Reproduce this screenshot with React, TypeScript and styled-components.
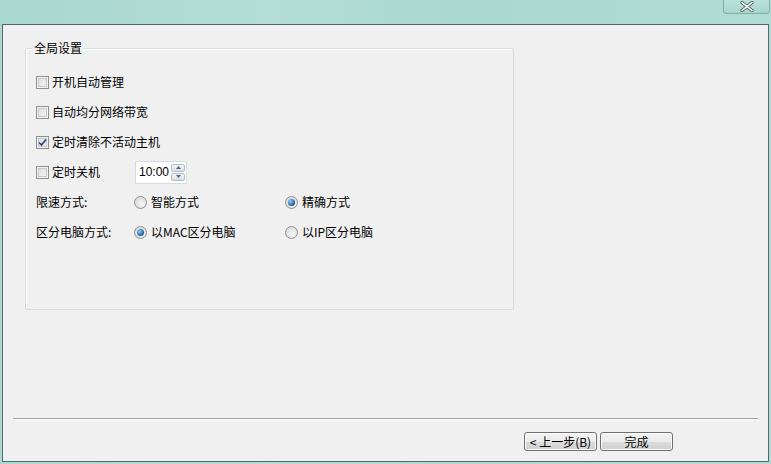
import styled, { createGlobalStyle } from 'styled-components';

const GlobalStyle = createGlobalStyle`
  html, body {
    margin: 0;
    padding: 0;
    background: #abd9d0;
  }
  body {
    font-family: "Noto Sans CJK SC", "Liberation Sans", sans-serif;
    font-size: 12px;
    color: #000;
  }
`;

const Frame = styled.div`
  width: 771px;
  height: 464px;
  display: flex;
  flex-direction: column;
  background: linear-gradient(90deg, #a9d8cf 0%, #b3ddd5 35%, #aad9d0 60%, #b1dcd4 100%);
  overflow: hidden;
`;

const TitleBar = styled.div`
  height: 24px;
  display: flex;
  justify-content: flex-end;
  align-items: flex-start;
  padding-right: 1px;
`;

const CloseButton = styled.div`
  width: 47px;
  height: 14px;
  box-sizing: border-box;
  border: 1px solid #84aea7;
  border-top: none;
  border-radius: 0 0 4px 4px;
  background: linear-gradient(#b9e1da, #a7d6cd);
  display: flex;
  justify-content: center;
  align-items: center;
`;

const Client = styled.div`
  flex: 1;
  margin: 0 2px 2px 2px;
  border: 1px solid #55676a;
  background: #f0f0f0;
  display: flex;
  flex-direction: column;
`;

const GroupBox = styled.div`
  position: relative;
  margin: 23px 0 0 22px;
  width: 489px;
  height: 262px;
  box-sizing: border-box;
  border: 1px solid #d8dcdf;
  box-shadow: inset 1px 1px 0 #fdfdfd;
  border-radius: 2px;
  padding: 18px 0 0 10px;
`;

const Legend = styled.span`
  position: absolute;
  top: -9px;
  left: 6px;
  padding: 0 2px;
  background: #f0f0f0;
  line-height: 16px;
`;

const Rows = styled.div`
  display: grid;
  grid-template-columns: 98px 151px auto;
  grid-auto-rows: 30px;
  align-items: center;
`;

const Check = styled.label<{ $span?: number }>`
  display: flex;
  align-items: center;
  gap: 3px;
  grid-column: ${(p) => (p.$span ? `span ${p.$span}` : 'auto')};
`;

const Box = styled.span`
  width: 13px;
  height: 13px;
  box-sizing: border-box;
  border: 1px solid #8e8f8f;
  background: linear-gradient(135deg, #dcdcdc, #f6f6f6);
  box-shadow: inset 0 0 0 1px #f4f4f4, inset 0 0 0 2px #c8c8c8;
  display: flex;
  align-items: center;
  justify-content: center;
`;

const Label = styled.span`
  line-height: 16px;
  white-space: nowrap;
`;

const Spinner = styled.div`
  width: 52px;
  height: 23px;
  box-sizing: border-box;
  margin-left: 1px;
  border: 1px solid #d6dbe0;
  background: #fff;
  display: flex;
  align-items: center;
  justify-content: space-between;
  padding: 2px 1px 2px 3px;
`;

const SpinText = styled.span`
  font-family: "Liberation Sans", sans-serif;
  font-size: 12px;
`;

const SpinButtons = styled.div`
  display: flex;
  flex-direction: column;
  gap: 1px;
`;

const SpinBtn = styled.div`
  width: 14px;
  height: 8px;
  box-sizing: border-box;
  border: 1px solid #b5bcc6;
  border-radius: 2px;
  background: linear-gradient(#f4f6f9, #d9dee6);
  display: flex;
  align-items: center;
  justify-content: center;
`;

const Radio = styled.label`
  display: flex;
  align-items: center;
  gap: 4px;
`;

const Circle = styled.span<{ $on?: boolean }>`
  width: 13px;
  height: 13px;
  box-sizing: border-box;
  border-radius: 50%;
  border: 1px solid #8f8f8f;
  background: radial-gradient(circle at 60% 60%, #f6f6f6, #d0d0d0);
  display: flex;
  align-items: center;
  justify-content: center;
  &::after {
    content: '';
    display: ${(p) => (p.$on ? 'block' : 'none')};
    width: 7px;
    height: 7px;
    border-radius: 50%;
    background: radial-gradient(circle at 35% 35%, #8ecbf3, #1a5c9c 70%, #0f3f73);
  }
`;

const Spacer = styled.div`
  flex: 1;
`;

const Separator = styled.div`
  margin: 0 10px;
  height: 1px;
  background: #a0a0a0;
  border-bottom: 1px solid #fcfcfc;
`;

const ButtonRow = styled.div`
  display: flex;
  justify-content: flex-end;
  gap: 3px;
  padding: 12px 95px 10px 0;
`;

const Button = styled.div`
  width: 73px;
  height: 19px;
  box-sizing: border-box;
  border: 1px solid #707070;
  border-radius: 3px;
  background: linear-gradient(#f3f3f3 0%, #ebebeb 50%, #dddddd 51%, #cfcfcf 100%);
  box-shadow: inset 0 0 0 1px #fbfbfb;
  display: flex;
  align-items: center;
  justify-content: center;
  line-height: 16px;
`;

const CheckMark = () => (
  <svg width="9" height="9" viewBox="0 0 9 9">
    <path d="M1 4.5 L3.5 7 L8 1.5" fill="none" stroke="#2a3e8c" strokeWidth="1.6" />
  </svg>
);

const Arrow = ({ up }: { up?: boolean }) => (
  <svg width="5" height="3" viewBox="0 0 5 3">
    <path d={up ? 'M0 3 L2.5 0 L5 3 Z' : 'M0 0 L2.5 3 L5 0 Z'} fill="#4d6185" />
  </svg>
);

export default function App() {
  return (
    <>
      <GlobalStyle />
      <Frame>
        <TitleBar>
          <CloseButton>
            <svg width="14" height="11" viewBox="0 0 14 11">
              <path d="M2 1.5 L12 9.5 M12 1.5 L2 9.5" stroke="#5d6b6a" strokeWidth="3.4" strokeLinecap="round" />
              <path d="M2 1.5 L12 9.5 M12 1.5 L2 9.5" stroke="#ffffff" strokeWidth="1.6" strokeLinecap="round" />
            </svg>
          </CloseButton>
        </TitleBar>
        <Client>
          <GroupBox>
            <Legend>全局设置</Legend>
            <Rows>
              <Check $span={3}>
                <Box />
                <Label>开机自动管理</Label>
              </Check>
              <Check $span={3}>
                <Box />
                <Label>自动均分网络带宽</Label>
              </Check>
              <Check $span={3}>
                <Box>
                  <CheckMark />
                </Box>
                <Label>定时清除不活动主机</Label>
              </Check>
              <Check>
                <Box />
                <Label>定时关机</Label>
              </Check>
              <Spinner>
                <SpinText>10:00</SpinText>
                <SpinButtons>
                  <SpinBtn>
                    <Arrow up />
                  </SpinBtn>
                  <SpinBtn>
                    <Arrow />
                  </SpinBtn>
                </SpinButtons>
              </Spinner>
              <span />
              <Label>限速方式:</Label>
              <Radio>
                <Circle />
                <Label>智能方式</Label>
              </Radio>
              <Radio>
                <Circle $on />
                <Label>精确方式</Label>
              </Radio>
              <Label>区分电脑方式:</Label>
              <Radio>
                <Circle $on />
                <Label>以MAC区分电脑</Label>
              </Radio>
              <Radio>
                <Circle />
                <Label>以IP区分电脑</Label>
              </Radio>
            </Rows>
          </GroupBox>
          <Spacer />
          <Separator />
          <ButtonRow>
            <Button>&lt; 上一步(B)</Button>
            <Button>完成</Button>
          </ButtonRow>
        </Client>
      </Frame>
    </>
  );
}
